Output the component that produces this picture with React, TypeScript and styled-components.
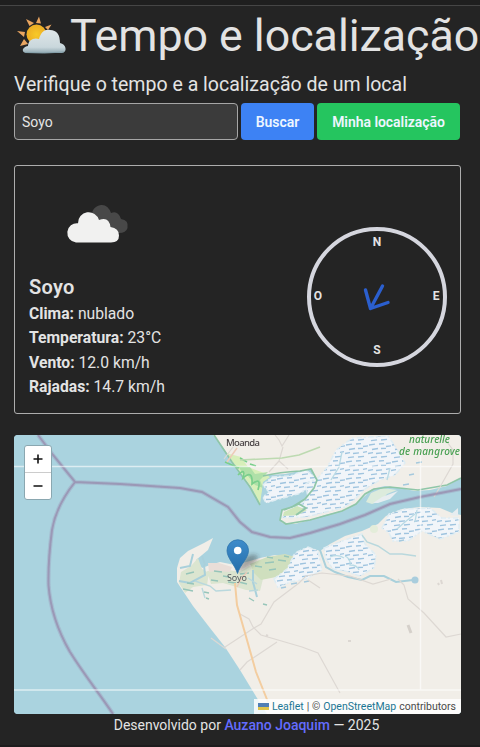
import React from "react";
import styled, { createGlobalStyle } from "styled-components";

const GlobalStyle = createGlobalStyle`
  * { box-sizing: border-box; }
  body {
    margin: 0;
    background: #242424;
    color: #e3e3e3;
    font-family: Roboto, "Liberation Sans", sans-serif;
    overflow: hidden;
  }
`;

const Page = styled.main`
  width: 480px;
  height: 747px;
  padding: 0 19px 0 14px;
  border-bottom: 2px solid #1d1c1d;
  display: flex;
  flex-direction: column;
  overflow: hidden;
`;

const TopRule = styled.div`
  height: 6px;
  flex: none;
  margin: 0 -19px 0 -14px;
  background: #1f1f1f;
  border-bottom: 1px solid #464646;
`;

const Title = styled.h1`
  display: flex;
  align-items: center;
  height: 62px;
  margin: 0;
  font-size: 44.7px;
  font-weight: 400;
  line-height: 60px;
  white-space: nowrap;
`;

const TitleText = styled.span`
  margin-top: -2px;
`;

const TitleIcon = styled.svg`
  flex: none;
  width: 56px;
  height: 44px;
  margin-top: -3px;
`;

const Subtitle = styled.p`
  height: 32px;
  margin: 0;
  font-size: 19.55px;
  line-height: 34px;
  white-space: nowrap;
`;

const SearchForm = styled.form`
  display: flex;
  gap: 3px;
  height: 37px;
  margin-top: 3px;
`;

const SearchInput = styled.input`
  width: 224px;
  padding: 0 7px;
  border: 1px solid #a6a6a6;
  border-radius: 4px;
  outline: 0;
  background: #3b3b3b;
  color: #e6e6e6;
  font: 400 14px Roboto, sans-serif;
`;

const Button = styled.button<{ $color: string; $width: number }>`
  width: ${(p) => p.$width}px;
  padding: 1px 0 0;
  border: 0;
  border-radius: 4px;
  background: ${(p) => p.$color};
  color: #eef6ff;
  font: 600 14px Roboto, sans-serif;
  letter-spacing: -0.05px;
  white-space: nowrap;
`;

const WeatherCard = styled.section`
  display: flex;
  justify-content: space-between;
  align-items: center;
  width: 447px;
  height: 249px;
  flex: none;
  margin-top: 25px;
  padding: 0 13px 0 14px;
  border: 1px solid #adadad;
  border-radius: 3px;
`;

const Details = styled.div`
  display: flex;
  flex-direction: column;
  height: 100%;
`;

const CloudIcon = styled.svg`
  width: 66px;
  height: 42px;
  margin: 38px 0 0 36px;
`;

const City = styled.h2`
  margin: 27px 0 1px;
  font-size: 20px;
  font-weight: 600;
  letter-spacing: 0.3px;
  line-height: 28px;
`;

const Fact = styled.p`
  margin: 0;
  font-size: 15.7px;
  line-height: 24.4px;
  white-space: nowrap;
  strong { font-weight: 700; }
`;

const Compass = styled.div`
  display: grid;
  grid-template: 20px 1fr 20px / 14px 1fr 14px;
  place-items: center;
  width: 140px;
  height: 140px;
  margin-top: 15px;
  padding: 1px 0 3px 0;
  border: 4px solid #d5d6de;
  border-radius: 50%;
  font-size: 12px;
  font-weight: 700;
  line-height: 14px;
`;

const Mark = styled.span<{ $area: string }>`
  grid-area: ${(p) => p.$area};
`;

const Needle = styled.svg`
  grid-area: 2 / 2;
  width: 32px;
  height: 32px;
`;

const MapFrame = styled.section`
  position: relative;
  width: 447px;
  height: 279px;
  flex: none;
  margin-top: 21px;
  border-radius: 4px;
  overflow: hidden;
  background: #aad3df;
`;

const MapDrawing = styled.svg`
  display: block;
  width: 447px;
  height: 279px;
`;

const ZoomControl = styled.div`
  position: absolute;
  left: 10px;
  top: 10px;
  display: flex;
  flex-direction: column;
  width: 28px;
  border: 1px solid #8aa7b0;
  border-radius: 3px;
  background: #fff;
`;

const ZoomButton = styled.button`
  display: flex;
  align-items: center;
  justify-content: center;
  height: 26px;
  padding: 0;
  border: 0;
  background: none;
  & + & { height: 27px; border-top: 1px solid #ccc; }
`;

const Attribution = styled.div`
  position: absolute;
  right: 0;
  bottom: 0;
  display: flex;
  align-items: center;
  gap: 3px;
  height: 15px;
  padding: 0 5px 0 4px;
  background: rgba(255, 255, 255, 0.82);
  color: #4a4a4a;
  font-size: 10.5px;
  line-height: 15px;
  white-space: nowrap;
`;

const MapLink = styled.a`
  color: #1b7694;
`;

const Flag = styled.svg`
  width: 11px;
  height: 7px;
`;

const Footer = styled.footer`
  width: 447px;
  margin-left: 9px;
  font-size: 14px;
  line-height: 23px;
  text-align: center;
  white-space: nowrap;
`;

const AuthorLink = styled.a`
  color: #646cff;
  font-weight: 500;
`;

const BORDER =
  "M38 435L53 455L75 482L120 484L180 488L202 492L228 507L240 522L252 532L270 537L290 538L310 533L340 524L365 515L390 504L420 497L461 489M75 482Q56 506 52 530Q48 560 48.500 585Q51 619 70 652C85 676 99 693 113 714";
const NORTH_SHORE =
  "M213 435L222 446L232 462L243 477L252 488L258 497L260 505L258 490L262 480L269 475L285 474L300 471L312 469L317 480L314 488L306 499L296 507L283 510L280 516L282 523L295 524L310 520L325 515L345 510L358 502L366 495L372 489L385 486L400 488L415 491L430 490L447 486L461 478V435Z";
const SOUTH_SHORE =
  "M213 538L204 543L188 551L180 558L177 568L177 582L183 591L193 606L210 628L225 647L240 670L257 698L267 714H461V515L452 513L440 508L420 507L402 509L386 516L378 524L362 531L345 536L330 544L320 551L308 547L298 553L290 557L275 555L260 558L250 561L235 565L220 562L210 565L202 568L196 560L208 550Z";

const marshes = [
  "M263 485L272 477L290 476L306 470L315 477L314 486L298 494L279 499L266 503L263 497L269 492Z",
  "M282 518L286 512L304 502L308 496L305 484L318 478L328 466L336 450L352 438L388 436L397 449L405 463L395 475L380 480L365 489L354 500L345 507L326 512L306 517Z",
  "M274 579L287 569L295 553L308 547L318 551L322 570L306 579L290 582L278 588Z",
  "M324 548L342 541L362 534L365 544L376 555L374 568L360 576L345 571L333 569L326 559Z",
  "M382 528L389 514L405 509L430 508L442 518L459 518L459 532L440 539L422 531L408 541L393 541L389 533Z",
];

function WeatherEmoji() {
  return (
    <TitleIcon viewBox="14 13 56 44" aria-hidden="true">
      <defs>
        <radialGradient id="sun">
          <stop offset="0" stopColor="#f7c928" />
          <stop offset="1" stopColor="#edac24" />
        </radialGradient>
        <linearGradient id="cloud" x2="0" y2="1">
          <stop stopColor="#dfe6e8" />
          <stop offset=".75" stopColor="#c9d7dc" />
          <stop offset="1" stopColor="#91a9b2" />
        </linearGradient>
      </defs>
      <path d="M36 22L39 15.500L41 22.500ZM45 26L51.500 23.500L48 29ZM29.500 25L26 18L34 22ZM25 31L17 30L24 36ZM24 38L20 45L28 43Z" fill="#e9a560" />
      <circle cx="36.500" cy="33.500" r="10" fill="url(#sun)" />
      <path d="M26 52C21 51 22 46 28 45C28 39 34 36 39 38C41 31 45 28 50 29C57 29 60 34 60 42C66 43 68 51 62 52Z" fill="url(#cloud)" />
      <path d="M25 51.500Q43 53 64 51" fill="none" stroke="#7f9ba4" strokeWidth=".8" />
    </TitleIcon>
  );
}

function MapTiles() {
  return (
    <MapDrawing viewBox="14 435 447 279" role="img" aria-label="Mapa de Soyo">
      <defs>
        <pattern id="marsh" width="23" height="17" patternUnits="userSpaceOnUse">
          <rect width="23" height="17" fill="#f1f5f9" />
          <path d="M1 3l6-.9M11 2l5-.4M18 4.500l5-.7M4 7.500l6-1M13 6.500l5-.2M0 11.500l5-.8M8 11.500l6-.6M18 10.300l4-.7M3 15.600l6-.7M13 15l6-.7" stroke="#9fc4df" strokeWidth="1.350" fill="none" />
        </pattern>
        <linearGradient id="pin" x2="0" y2="1">
          <stop stopColor="#3e8ccb" />
          <stop offset="1" stopColor="#246da9" />
        </linearGradient>
        <filter id="soft" x="-10%" y="-10%" width="120%" height="120%">
          <feGaussianBlur stdDeviation=".6" />
        </filter>
        <filter id="shadow" x="-50%" y="-50%" width="200%" height="200%">
          <feGaussianBlur stdDeviation="2" />
        </filter>
      </defs>
      <rect x="14" y="435" width="447" height="279" fill="#aad3df" />
      <g filter="url(#soft)">
        <path d={NORTH_SHORE} fill="#f1eee8" />
        <path d={SOUTH_SHORE} fill="#f1eee8" />
        <path d="M226 453L241 457L248 467L264 473L274 480L263 484L260 504L252 488L239 470Z" fill="#d7efb9" />
        <path d="M238 466l12 1 5 7 13-2-8 8 3 8-8-3-7-9-5-2Z" fill="#afe0a8" />
        <path d="M181 572l10-6 7-8 4 11 7 4-2 12-14 2-8 6-6-10ZM207 571l17-2 15 3 10-6 13 2 8-5 17-7 4 8-11 10-17 5-3 12-14-1-13-4-10-3-12 1Z" fill="#dbe5d0" />
        <path d="M250 564l17-7 18-3 10 3-6 12-13 8-15 3-7-7Z" fill="#cfdfbe" />
        <path d="M208 563l11 0 13 4-2 5-14-1-7 1Z" fill="#e9ded8" />
        <path d="M263 482l10-7 14 1 20-7 9 9-3 11-18 9-15 8-19-4Z" fill="#aad3df" />
        {marshes.map((d) => (
          <path key={d} d={d} fill="url(#marsh)" stroke="#dfedf3" strokeWidth="1.500" strokeDasharray="5 2 2 3" />
        ))}
        <path d="M284 512l13-6 10 4-9 5-15 1Z" fill="#cee5bb" />
        <path d="M366 502l5-9 12-5 14 2-10 4-6 7-9 3Z" fill="#dcebdc" />
        <path d="M373 503l9-6 16-6-8 8-12 4ZM450 515l8-7v8Z" fill="#e7edf0" />
        <path d="M214 435L232 462L250 487L260 505M263 476Q280 472 300 471L311 469L317 480L314 488L305 499L292 507L282 510L280 520L286 524L310 520L342 511L356 504L365 494L374 489L390 487L418 490L447 485L461 478M284 510l15-6 7 4-10 7" fill="none" stroke="#8fc6a8" strokeWidth="1.700" />
        <path d="M238 475q8-8 5 3q10-9 9 6q10-8 6 6M240 458l7 4M225 462l14 6M250 464l6 2" fill="none" stroke="#7acf8c" strokeWidth="1.700" />
        <path d="M320 550L326 567L335 572L348 577L362 580L370 576L384 576L396 582L413 580M193 554l-3 12-10 2M204 565l1 10-15 8-11-2M202 556l3 9M253 570l0 12 4 15" fill="none" stroke="#a9d0db" strokeWidth="2" />
        <path d="M362 535L367 542L378 546L390 554L402 554L416 556M248 578l9 6M249 591l9-1M195 581l15 5 6 5 15-1M202 588l3 10" fill="none" stroke="#b9d8dd" strokeWidth="1.400" />
        <path d="M345 556q6 3 5 9q7 0 9 5M330 557q8-3 14 1M397 529l8-7 10-8M417 510l-2 12M342 452l-3 15-8 13M387 480l3-12" fill="none" stroke="#b9dbe5" strokeWidth="1.300" />
        <circle cx="374" cy="529" r="4" fill="#e4edda" />
        <circle cx="415" cy="580" r="3.500" fill="#a9cddd" />
        <path d="M214 571l8 1M223 576l6 1M211 580l7 1M228 582l8 1M240 574l9-1M255 566l7 1M265 563l9-1M269 570l7-1M278 560l8 1M186 574l8-2M187 583l7 1M183 589l10 2M204 592l5 1M206 598l3 1M239 582l8 2M249 598l5 3M263 604l4 1M267 557l6 1M284 556l5 1" stroke="#96c5b9" strokeWidth="1.400" />
        <path d="M281 588l5-1M291 584l6-1M304 582l5-1M399 541l5-1M403 485l6-1M409 475l5-1M416 463l6-1" stroke="#a5c9dd" strokeWidth="1.300" />
        <path d="M275 435L279 440L282 446L289 435M283 447L279 461L288 469M279 461L269 472M233 447L224 459M226 649L211 638M225 647L254 628L261 624L274 602L299 583L306 576L322 573L350 576L373 584L391 579M240 670L247 662L277 642M240 614L249 619L253 627L261 635L302 647L318 653L340 693M398 579L404 585L408 599L424 613L446 637L461 634M434 497L440 487L453 464V450L447 442L438 438M320 588l-12-8" fill="none" stroke="#ddd8d3" strokeWidth="1.200" />
        <path d="M240 460L282 458L299 455L320 447" fill="none" stroke="#bddab1" strokeWidth="1.600" />
        <path d="M235 583L237 605L245 633L256 672L264 692L268 702" fill="none" stroke="#f3cda0" strokeWidth="2" />
        <path d="M237 587l4-8 6-7M227 462l10-14" fill="none" stroke="#edcbb9" strokeWidth="1.500" />
        <path d="M408 625l3 8" stroke="#d5d0ca" strokeWidth="3" />
        <path d="M441 580l1 4M438 583l1 2M266 635l2 1M348 641l3 0" stroke="#dcd7d2" strokeWidth="2" />
        <path d={BORDER} fill="none" stroke="#9683a8" strokeOpacity=".28" strokeWidth="4.200" />
        <path d={BORDER} fill="none" stroke="#9581a5" strokeOpacity=".6" strokeWidth="2" />
      </g>
      <path d="M14 466.500H461M14 690H461M420.500 435V690" fill="none" stroke="#fff" strokeOpacity=".6" strokeWidth="1.500" />
      <g fontFamily="Noto Sans, sans-serif" filter="url(#soft)">
        <text x="226" y="446" fontSize="9.500" fill="#443e40" fontWeight="500" textLength="34">Moanda</text>
        <g fill="#48a052" fontStyle="italic" fontWeight="500" fontSize="10">
          <text x="409" y="443" textLength="41">naturelle</text>
          <text x="399" y="455" textLength="61">de mangrove</text>
        </g>
        <text x="227" y="580.500" fontSize="9" fill="#555b60" textLength="20">Soyo</text>
      </g>
      <path d="M237 572L244 558Q253 552 258 556Q258 563 245 569Z" fill="#333" fillOpacity=".4" filter="url(#shadow)" />
      <path d="M237.500 573.500C235 565 227 558 227 550.500A10.500 10.500 0 0 1 248.500 550.500C248.500 558 240 565 237.500 573.500Z" fill="url(#pin)" stroke="#2d73ac" strokeWidth=".8" />
      <circle cx="237.700" cy="550.500" r="3.800" fill="#fff" />
    </MapDrawing>
  );
}

export default function App() {
  return (
    <>
      <GlobalStyle />
      <Page>
        <TopRule />
        <Title>
          <WeatherEmoji />
          <TitleText>Tempo e localização</TitleText>
        </Title>
        <Subtitle>Verifique o tempo e a localização de um local</Subtitle>
        <SearchForm onSubmit={(e) => e.preventDefault()}>
          <SearchInput defaultValue="Soyo" aria-label="Local" />
          <Button type="submit" $color="#3d82f4" $width={73}>Buscar</Button>
          <Button type="button" $color="#25c55f" $width={143}>Minha localização</Button>
        </SearchForm>
        <WeatherCard>
          <Details>
            <CloudIcon viewBox="65 204 66 42" aria-hidden="true">
              <path d="M94 222C88 210 97 205 102 205Q108 205 111 213Q118 210 121 219Q129 220 127.500 228Q126 233 119 233H103Z" fill="#484848" />
              <path d="M76 242.500A9.700 9.700 0 0 1 78 223.200A10.700 10.700 0 0 1 99 220Q109 216 110.500 227Q119 228 119 235.500Q119 242.500 111 242.500Z" fill="#f1f1f0" />
            </CloudIcon>
            <City>Soyo</City>
            <Fact><strong>Clima:</strong> nublado</Fact>
            <Fact><strong>Temperatura:</strong> 23°C</Fact>
            <Fact><strong>Vento:</strong> 12.0 km/h</Fact>
            <Fact><strong>Rajadas:</strong> 14.7 km/h</Fact>
          </Details>
          <Compass>
            <Mark $area="1 / 2">N</Mark>
            <Mark $area="2 / 1">O</Mark>
            <Needle viewBox="361 280 32 32" aria-label="Direção do vento">
              <path d="M382.500 286L370.500 308.500M365.500 290L370.500 308.500L388 302.500" fill="none" stroke="#2b5fce" strokeWidth="3.400" strokeLinecap="round" strokeLinejoin="round" />
            </Needle>
            <Mark $area="2 / 3">E</Mark>
            <Mark $area="3 / 2">S</Mark>
          </Compass>
        </WeatherCard>
        <MapFrame>
          <MapTiles />
          <ZoomControl>
            <ZoomButton aria-label="Aproximar">
              <svg width="10" height="10" viewBox="0 0 10 10"><path d="M5 .5v9M.5 5h9" stroke="#111" strokeWidth="1.600" /></svg>
            </ZoomButton>
            <ZoomButton aria-label="Afastar">
              <svg width="10" height="10" viewBox="0 0 10 10"><path d="M.5 5h9" stroke="#111" strokeWidth="1.600" /></svg>
            </ZoomButton>
          </ZoomControl>
          <Attribution>
            <Flag viewBox="0 0 11 7"><path d="M0 0h11v4H0z" fill="#527fb5" /><path d="M0 4h11v3H0z" fill="#e0c44b" /></Flag>
            <MapLink>Leaflet</MapLink>
            <span>| ©</span>
            <MapLink>OpenStreetMap</MapLink>
            <span>contributors</span>
          </Attribution>
        </MapFrame>
        <Footer>Desenvolvido por <AuthorLink>Auzano Joaquim</AuthorLink> — 2025</Footer>
      </Page>
    </>
  );
}
